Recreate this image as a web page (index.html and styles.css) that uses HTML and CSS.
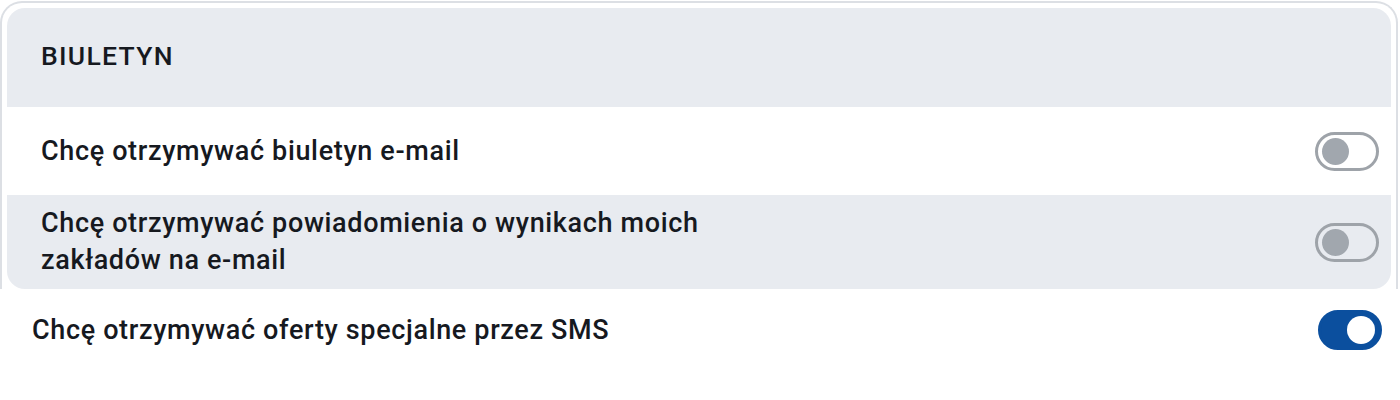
FILE: index.html
```html
<!DOCTYPE html>
<html lang="pl">
<head>
<meta charset="utf-8">
<link rel="stylesheet" href="styles.css">
</head>
<body>
<section class="card">
  <div class="card-inner">
    <div class="card-header">BIULETYN</div>
    <div class="row row-white">
      <span class="label">Chcę otrzymywać biuletyn e-mail</span>
      <span class="toggle"><span class="knob"></span></span>
    </div>
    <div class="row row-gray">
      <span class="label">Chcę otrzymywać powiadomienia o wynikach moich zakładów na e-mail</span>
      <span class="toggle"><span class="knob"></span></span>
    </div>
  </div>
</section>
<div class="row row-outside">
  <span class="label">Chcę otrzymywać oferty specjalne przez SMS</span>
  <span class="toggle on"><span class="knob"></span></span>
</div>
</body>
</html>
```

FILE: styles.css
```css
html, body {
  margin: 0;
  padding: 0;
  background: #ffffff;
}
body {
  font-family: Roboto, "Liberation Sans", sans-serif;
  color: #16191f;
  width: 1400px;
}
.card {
  margin: 1px 2px 0 0;
  border: 2px solid #dcdfe4;
  border-bottom: none;
  border-radius: 22px 22px 0 0;
  padding: 5px 5px 0 5px;
  background: #ffffff;
}
.card-inner {
  border-radius: 18px;
  overflow: hidden;
}
.card-header {
  background: #e8ebf0;
  height: 99px;
  box-sizing: border-box;
  padding: 0 0 4px 34px;
  display: flex;
  align-items: center;
  font-size: 26.5px;
  font-weight: 500;
  letter-spacing: 1.3px;
}
.row {
  display: flex;
  align-items: center;
  justify-content: space-between;
  font-size: 27px;
  font-weight: 500;
  letter-spacing: 0.65px;
  line-height: 37px;
}
.card .row {
  padding: 10px 12px 10px 34px;
  min-height: 68px;
}
.row-white { background: #ffffff; }
.row-gray { background: #e8ebf0; min-height: 75px; }
.label { max-width: 700px; }
.row-outside {
  padding: 0 18px 0 32px;
  height: 82px;
}
.toggle {
  box-sizing: border-box;
  width: 64px;
  height: 39px;
  border: 3px solid #9ea3a9;
  border-radius: 20px;
  display: flex;
  align-items: center;
  padding-left: 4px;
  flex-shrink: 0;
}
.knob {
  width: 27px;
  height: 27px;
  border-radius: 50%;
  background: #a1a7ae;
}
.toggle.on {
  background: #0b4f9e;
  border-color: #0b4f9e;
  justify-content: flex-end;
  padding: 0 4px 0 0;
  height: 40px;
}
.toggle.on .knob {
  background: #ffffff;
  width: 28px;
  height: 28px;
}
```
